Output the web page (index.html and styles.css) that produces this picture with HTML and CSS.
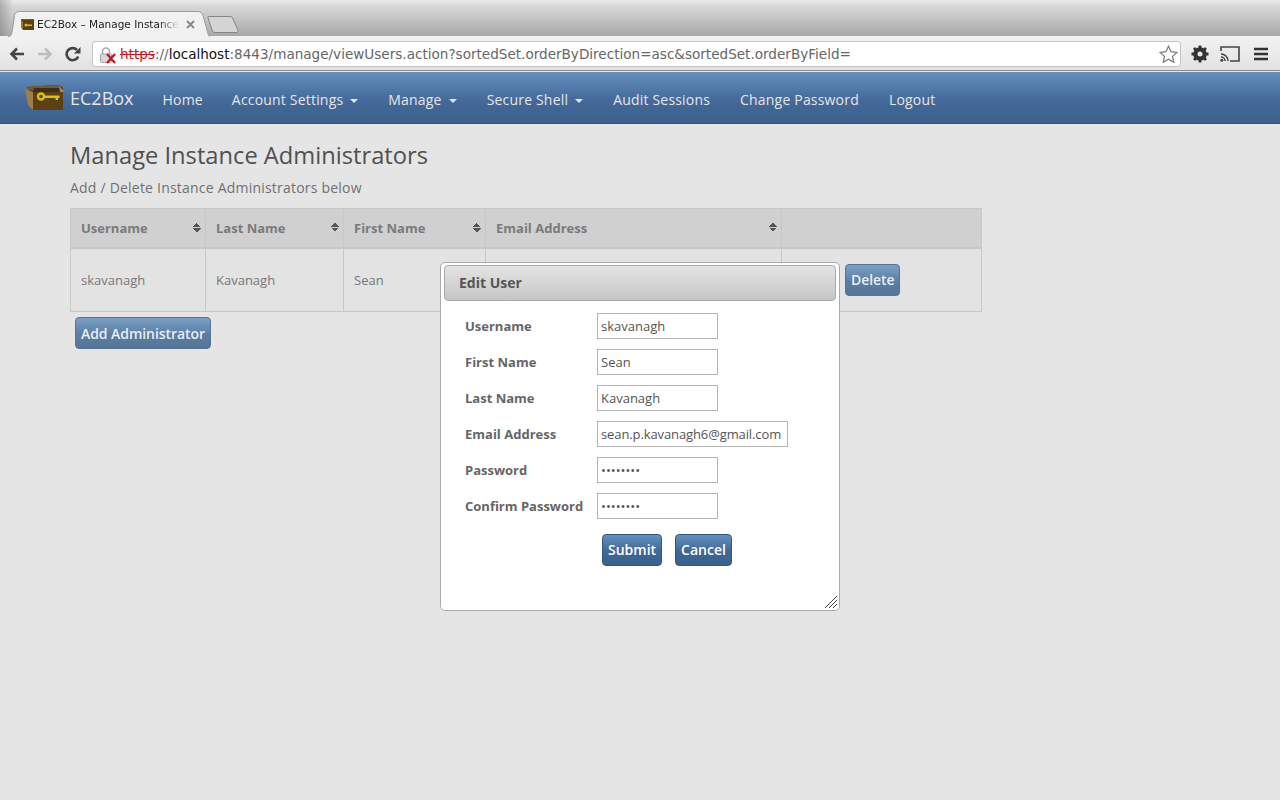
FILE: index.html
```html
<!DOCTYPE html>
<html lang="en">
<head>
<meta charset="utf-8">
<title>EC2Box - Manage Instance Administrators</title>
<link rel="stylesheet" href="styles.css">
</head>
<body>
<header class="chrome">
  <div class="tabstrip">
    <div class="tab">
      <svg class="tab-shape" width="202" height="26" viewBox="0 0 202 26"><path d="M0 25.500C2.500 25.500 3.500 24 4 21L6.500 4.500C7 2 8.500 .5 11 .5H190C192.500 .5 194 2 195 4.500L199 19C200 23 200.500 25.500 202 25.500" fill="#f1f1f1" stroke="#9c9c9c"/></svg>
      <svg class="favicon" width="13" height="11" viewBox="0 0 13 11"><path d="M0 0h13v3H0z" fill="#7a5a2a"/><path d="M0 1h13v10H2L0 8z" fill="#5d3f14"/><path d="M0 1l2 2v8L0 8z" fill="#9a7440"/><circle cx="5" cy="6" r="1.500" fill="#e0b820"/><path d="M5 5.500h6v1.500H5z" fill="#e0b820"/></svg>
      <span class="tab-title">EC2Box – Manage Instance</span>
      <svg class="tab-close" width="9" height="9" viewBox="0 0 9 9"><path d="M1 1l7 7M8 1L1 8" stroke="#858585" stroke-width="1.800"/></svg>
    </div>
    <svg class="newtab" width="32" height="17" viewBox="0 0 32 17"><path d="M1.500 .5H23C25 .5 25.500 1.500 26 3L30.500 13C31.500 15 31 16.500 29 16.500H8C6 16.500 5.500 15.500 5 14L1 2C.7 1 .8 .5 1.500 .5Z" fill="#d4d4d4" stroke="#858585"/></svg>
  </div>
  <div class="toolbar">
    <svg class="tool" width="18" height="16" viewBox="0 0 18 16"><path d="M16 8H4M9 2.500L3.500 8 9 13.500" fill="none" stroke="#444" stroke-width="2.600"/></svg>
    <svg class="tool" width="18" height="16" viewBox="0 0 18 16"><path d="M2 8H14M9 2.500L14.500 8 9 13.500" fill="none" stroke="#bdbdbd" stroke-width="2.600"/></svg>
    <svg class="tool" width="18" height="16" viewBox="0 0 18 16"><path d="M14.200 10.500A6 6 0 1 1 13 4" fill="none" stroke="#444" stroke-width="2.600"/><path d="M10 7.500h6.500V1z" fill="#444"/></svg>
    <div class="omnibox">
      <svg class="lock" width="17" height="17" viewBox="0 0 17 17"><path d="M2.500 7V4.500a3.500 3.500 0 0 1 7 0V7" fill="none" stroke="#a8a8a8" stroke-width="1.600"/><rect x=".5" y="7" width="11" height="8.500" rx="1" fill="#d8d8d8" stroke="#a8a8a8"/><path d="M7 7l8 9M15 7l-8 9" stroke="#c8141c" stroke-width="2.200"/></svg>
      <span class="url"><s class="scheme">https</s><span class="muted">://</span><span class="host">localhost</span><span class="muted">:8443/manage/viewUsers.action?sortedSet.orderByDirection=asc&amp;sortedSet.orderByField=</span></span>
      <svg class="star" width="19" height="18" viewBox="0 0 19 18"><path d="M9.500 1.200l2.500 5.500 6 .7-4.500 4 1.300 5.900-5.300-3-5.300 3 1.300-5.900-4.500-4 6-.7z" fill="#fff" stroke="#777" stroke-width="1.200"/></svg>
    </div>
    <svg class="tool-right gear" width="18" height="18" viewBox="0 0 18 18"><circle cx="9" cy="9" r="5" fill="none" stroke="#333" stroke-width="3.600"/><path d="M9 .5v17M.5 9h17M3 3l12 12M15 3L3 15" stroke="#333" stroke-width="2.800"/><circle cx="9" cy="9" r="2.500" fill="#e6e6e6"/></svg>
    <svg class="tool-right" width="20" height="16" viewBox="0 0 20 16"><path d="M1 5V1h18v14H10" fill="none" stroke="#444" stroke-width="1.600"/><path d="M1 8a7 7 0 0 1 7 7M1 11a4 4 0 0 1 4 4" fill="none" stroke="#444" stroke-width="1.500"/><circle cx="1.800" cy="14.200" r="1.500" fill="#444"/></svg>
    <svg class="tool-right menu" width="14" height="14" viewBox="0 0 14 14"><path d="M0 2h14M0 7h14M0 12h14" stroke="#333" stroke-width="2.400"/></svg>
  </div>
</header>

<nav class="navbar">
  <a class="brand">
    <svg width="39" height="25" viewBox="0 0 39 25"><path d="M2 2L34 0l4 3-3 6H8z" fill="#3a3020"/><path d="M1 3l7-2 28-1-1 3H9l-1 3z" fill="#7a5a2a"/><path d="M34 0l5 7-4 0z" fill="#a98a55"/><path d="M0 4l8 3v18l-5-5z" fill="#a07d49"/><path d="M8 7h30v18H8z" fill="#5d3f14"/><circle cx="16" cy="11.500" r="3" fill="none" stroke="#dcc014" stroke-width="2.400"/><path d="M19 10.500h15.500v2.500h-1.500v2h-2.500v-2H19z" fill="#dcc014"/></svg>
    <span>EC2Box</span>
  </a>
  <a class="nav-link">Home</a>
  <a class="nav-link">Account Settings<i class="caret"></i></a>
  <a class="nav-link">Manage<i class="caret"></i></a>
  <a class="nav-link">Secure Shell<i class="caret"></i></a>
  <a class="nav-link">Audit Sessions</a>
  <a class="nav-link">Change Password</a>
  <a class="nav-link">Logout</a>
</nav>

<main class="content">
  <h3 class="title">Manage Instance Administrators</h3>
  <p class="lead">Add / Delete Instance Administrators below</p>
  <table class="users">
    <thead>
      <tr>
        <th class="c1"><span class="th-in">Username<i class="sort"></i></span></th>
        <th class="c2"><span class="th-in">Last Name<i class="sort"></i></span></th>
        <th class="c3"><span class="th-in">First Name<i class="sort"></i></span></th>
        <th class="c4"><span class="th-in">Email Address<i class="sort"></i></span></th>
        <th class="c5"></th>
      </tr>
    </thead>
    <tbody>
      <tr>
        <td>skavanagh</td>
        <td>Kavanagh</td>
        <td>Sean</td>
        <td></td>
        <td class="actions"><button class="btn dim del">Delete</button></td>
      </tr>
    </tbody>
  </table>
  <button class="btn dim add">Add Administrator</button>
</main>

<section class="dialog">
  <h4 class="dialog-title">Edit User</h4>
  <form class="dialog-form">
    <label>Username</label><input class="field" value="skavanagh">
    <label>First Name</label><input class="field" value="Sean">
    <label>Last Name</label><input class="field" value="Kavanagh">
    <label>Email Address</label><input class="field wide" value="sean.p.kavanagh6@gmail.com">
    <label>Password</label><input class="field" type="password" value="password">
    <label>Confirm Password</label><input class="field" type="password" value="password">
    <div class="dialog-actions">
      <button type="button" class="btn">Submit</button>
      <button type="button" class="btn">Cancel</button>
    </div>
  </form>
  <svg class="grip" width="12" height="12" viewBox="0 0 12 12"><path d="M0 12L12 0M4 12L12 4M8 12L12 8" stroke="#444" stroke-width="1"/></svg>
</section>
</body>
</html>
```
FILE: styles.css
```css
* { box-sizing: border-box; }
html, body { margin: 0; height: 100%; }
body {
  background: #e5e5e5;
  font-family: "Open Sans", sans-serif;
  color: #666;
  overflow: hidden;
  position: relative;
}
.chrome { height: 72px; }
.tabstrip {
  height: 36px;
  background:
    linear-gradient(100deg, rgba(0,0,0,.22) 0, rgba(0,0,0,0) 14px),
    linear-gradient(#ececec 0, #d8d8d8 6px, #a8a8a8 36px);
  display: flex;
  align-items: flex-end;
  padding-left: 8px;
}
.tab {
  position: relative;
  width: 202px;
  height: 26px;
  display: flex;
  align-items: center;
  padding-left: 13px;
  color: #222;
  font-family: "DejaVu Sans", sans-serif;
  font-size: 10.500px;
  margin-bottom: -1px;
  z-index: 1;
}
.tab-shape { position: absolute; left: 0; top: 0; }
.favicon, .tab-title, .tab-close { position: relative; flex: none; }
.tab-title {
  margin-left: 3px;
  width: 142px;
  white-space: nowrap;
  overflow: hidden;
  -webkit-mask-image: linear-gradient(to right, #000 122px, transparent 142px);
  mask-image: linear-gradient(to right, #000 122px, transparent 142px);
}
.tab-close { margin-left: 7px; }
.newtab { margin: 0 0 3px -3px; }
.toolbar {
  height: 35px;
  padding: 2px 0 0 8px;
  background: linear-gradient(#f2f2f2, #e2e2e2);
  border-bottom: 1px solid #8c8c8c;
  display: flex;
  align-items: center;
}
.tool { margin-right: 10px; flex: none; }
.omnibox {
  width: 1089px;
  height: 26px;
  background: #fff;
  border: 1px solid #c4c4c4;
  border-radius: 3px;
  display: flex;
  align-items: center;
  padding: 0 0 0 7px;
  flex: none;
}
.lock { flex: none; margin-top: 3px; }
.url {
  margin-left: 3px;
  white-space: nowrap;
  flex: 1;
  font-family: "DejaVu Sans", sans-serif;
  font-size: 13.570px;
}
.scheme { color: #c8141c; }
.muted { color: #666; }
.host { color: #111; }
.star { margin-right: 2px; flex: none; }
.tool-right { flex: none; margin-left: 11px; }
.tool-right.gear { margin-left: 10px; }
.tool-right.menu { margin-left: 14px; }

.navbar {
  height: 52px;
  padding: 3px 0 0 25px;
  background: linear-gradient(#6490bd, #44699a 55%, #3b618c);
  border-bottom: 1px solid #2f4f75;
  display: flex;
  align-items: center;
  color: #e6e6e6;
  font-size: 14px;
  letter-spacing: .19px;
}
.brand {
  display: flex;
  align-items: center;
  font-size: 18px;
  margin-right: 29px;
  gap: 6px;
  letter-spacing: 0;
  margin-top: -3px;
}
.nav-link { margin-right: 30px; white-space: nowrap; }
.nav-link:nth-child(2) { margin-right: 29px; }
.caret {
  display: inline-block;
  margin-left: 7px;
  vertical-align: 2px;
  border-top: 4px solid #e6e6e6;
  border-left: 4px solid transparent;
  border-right: 4px solid transparent;
}

.content { padding: 0 0 0 70px; }
.title {
  margin: 16px 0 0;
  height: 31px;
  font-size: 23.700px;
  line-height: 31px;
  font-weight: 400;
  color: #505050;
}
.lead {
  margin: 6px 0 0;
  height: 22px;
  line-height: 22px;
  font-size: 14px;
  letter-spacing: .21px;
  color: #707070;
}
.users {
  margin-top: 9px;
  width: 912px;
  border-collapse: collapse;
  table-layout: fixed;
  font-size: 13px;
}
.users th, .users td { border: 1px solid #c8c8c8; padding: 0 10px; }
.users thead tr { height: 39px; background: #d0d0d0; }
.users thead th { border-bottom-width: 2px; text-align: left; color: #7a7a7a; font-weight: 700; line-height: 18px; }
.users tbody tr { height: 64px; background: #e3e3e3; }
.users td { color: #777; white-space: nowrap; }
.c1 { width: 135px; }
.c2 { width: 138px; }
.c3 { width: 142px; }
.c4 { width: 296px; }
.th-in { display: flex; align-items: center; justify-content: space-between; margin-right: -6px; }
.sort {
  width: 8px;
  height: 9px;
  background:
    linear-gradient(to bottom right, transparent 50%, #555 50%) left top / 4px 4px no-repeat,
    linear-gradient(to bottom left, transparent 50%, #555 50%) right top / 4px 4px no-repeat,
    linear-gradient(to top right, transparent 50%, #555 50%) left bottom / 4px 4px no-repeat,
    linear-gradient(to top left, transparent 50%, #555 50%) right bottom / 4px 4px no-repeat;
}
.actions { text-align: right; padding-right: 81px !important; }

.btn {
  font-family: "Open Sans", sans-serif;
  font-size: 14px;
  font-weight: 600;
  color: #fff;
  height: 32px;
  padding: 0 5px 1px;
  border: 1px solid #34567e;
  border-radius: 4px;
  background: linear-gradient(#6490bd, #3f6795 55%, #3b618c);
}
.btn.dim {
  background: linear-gradient(#7d9fc4, #5a7ea3 55%, #567596);
  border-color: #557395;
  color: #e8eef4;
  letter-spacing: -.06px;
  padding-bottom: 0;
}
.btn.del { padding: 0 4.500px; }
.add { margin: 5px 0 0 5px; display: block; }

.dialog {
  position: absolute;
  left: 440px;
  top: 262px;
  width: 400px;
  height: 349px;
  background: #fff;
  border: 1px solid #ababab;
  border-radius: 5px;
  padding: 2px 3px;
}
.dialog-title {
  margin: 0;
  height: 36px;
  line-height: 34px;
  padding-left: 14px;
  font-size: 14px;
  font-weight: 700;
  color: #555;
  border: 1px solid #aaa;
  border-radius: 4px;
  background: linear-gradient(#e4e4e4, #c6c6c6);
}
.dialog-form {
  display: grid;
  grid-template-columns: 132px 1fr;
  grid-auto-rows: 26px;
  row-gap: 10px;
  align-items: center;
  justify-items: start;
  padding: 12px 0 0 21px;
}
.dialog-form label { font-size: 13px; font-weight: 700; color: #666; }
.field {
  width: 121px;
  height: 26px;
  border: 1px solid #b4b4b4;
  padding: 0 3px;
  font-family: "Open Sans", sans-serif;
  font-size: 13px;
  color: #555;
  background: #fff;
}
.field.wide { width: 191px; letter-spacing: -.11px; }
.dialog-actions {
  grid-column: 1 / -1;
  margin: 16px 0 0 137px;
  display: flex;
  gap: 13px;
}
.grip { position: absolute; right: 2px; bottom: 2px; }
```
